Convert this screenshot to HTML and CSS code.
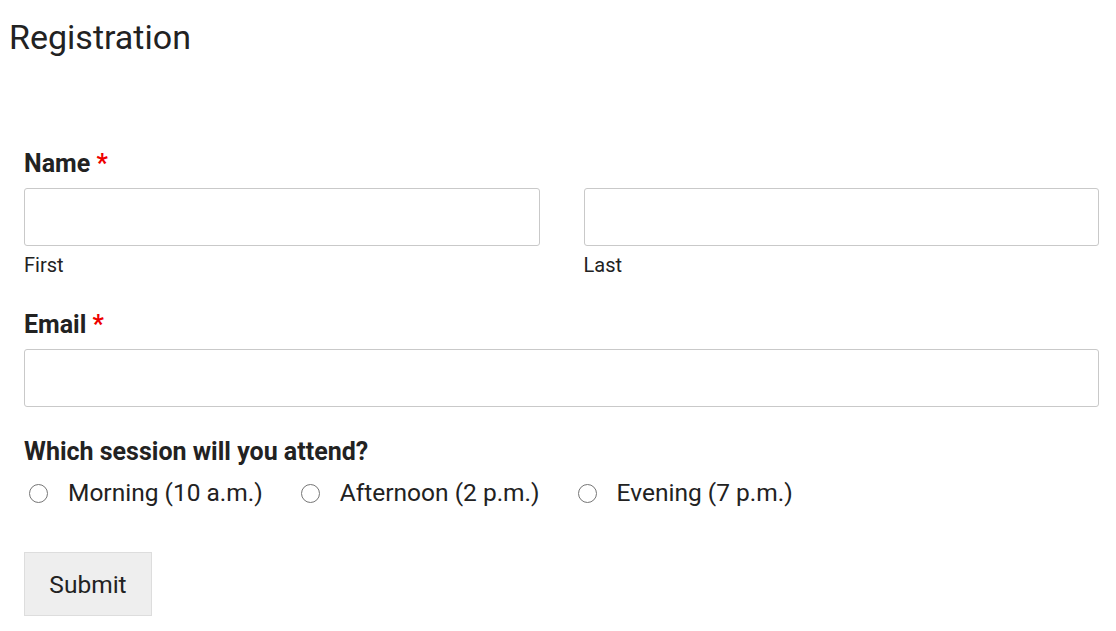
FILE: index.html
```html
<!DOCTYPE html>
<html>
<head>
<meta charset="utf-8">
<link rel="stylesheet" href="styles.css">
</head>
<body>
<h1 class="title">Registration</h1>
<form class="form">
  <div class="field field-name">
    <label class="label">Name <span class="req">*</span></label>
    <div class="name-row">
      <div class="name-col">
        <input class="input" type="text">
        <span class="sublabel">First</span>
      </div>
      <div class="name-col">
        <input class="input" type="text">
        <span class="sublabel">Last</span>
      </div>
    </div>
  </div>
  <div class="field field-email">
    <label class="label">Email <span class="req">*</span></label>
    <input class="input" type="email">
  </div>
  <div class="field field-session">
    <label class="label">Which session will you attend?</label>
    <div class="radios">
      <label class="radio"><span class="circle"></span>Morning (10 a.m.)</label>
      <label class="radio"><span class="circle"></span>Afternoon (2 p.m.)</label>
      <label class="radio"><span class="circle"></span>Evening (7 p.m.)</label>
    </div>
  </div>
  <button class="submit" type="button">Submit</button>
</form>
</body>
</html>
```
FILE: styles.css
```css
html, body { margin: 0; padding: 0; background: #fff; }
body {
  font-family: Roboto, "Noto Sans", sans-serif;
  color: #222;
  padding: 0 9px;
}
.title {
  margin: 0;
  padding-top: 17px;
  font-size: 34px;
  font-weight: 400;
  line-height: 40px;
  color: #222;
}
.form {
  padding: 0 8px 0 15px;
  margin-top: 92px;
}
.field-name { margin-bottom: 33px; }
.field-email { margin-bottom: 30px; }
.field-session { margin-bottom: 0; }
.label {
  display: block;
  font-size: 25px;
  font-weight: 700;
  line-height: 30px;
  margin-bottom: 9px;
  color: #222;
}
.req { color: #e00; font-weight: 700; }
.name-row {
  display: grid;
  grid-template-columns: 1fr 1fr;
  column-gap: 44px;
}
.name-col { display: flex; flex-direction: column; }
.input {
  display: block;
  box-sizing: border-box;
  width: 100%;
  height: 58px;
  border: 1px solid #c9c9c9;
  border-radius: 3px;
  margin: 0;
  background: #fff;
}
.sublabel {
  font-size: 20px;
  line-height: 24px;
  margin-top: 7px;
  color: #222;
}
.radios { display: flex; gap: 33px; margin-top: 11px; }
.radio {
  display: flex;
  align-items: center;
  font-size: 24.5px;
  line-height: 30px;
  color: #222;
}
.circle {
  width: 19px;
  height: 19px;
  box-sizing: border-box;
  border: 1px solid #767676;
  border-radius: 50%;
  margin: 0 20px 0 5px;
  background: #fff;
}
.submit {
  display: block;
  font-family: Roboto, "Noto Sans", sans-serif;
  font-size: 24.5px;
  color: #222;
  background: #eee;
  border: 1px solid #ddd;
  width: 128px;
  height: 64px;
  margin-top: 44px;
  padding: 0;
}
```
